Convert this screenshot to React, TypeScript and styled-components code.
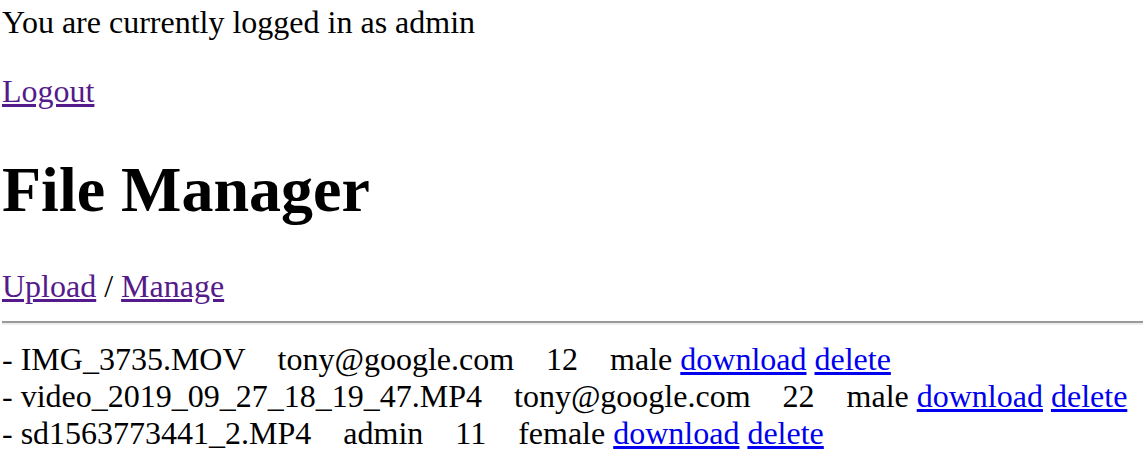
import styled, { createGlobalStyle } from 'styled-components';

const files = [
  { name: 'IMG_3735.MOV', owner: 'tony@google.com', age: 12, gender: 'male' },
  { name: 'video_2019_09_27_18_19_47.MP4', owner: 'tony@google.com', age: 22, gender: 'male' },
  { name: 'sd1563773441_2.MP4', owner: 'admin', age: 11, gender: 'female' },
];

// four spaces between fields, like the original "&nbsp;&nbsp;&nbsp; "
const GAP = '\u00a0\u00a0\u00a0 ';

const App = () => {
  return (
    <>
      <GlobalStyle />
      <StyledPage>
        <p className="status">You are currently logged in as admin</p>
        <p>
          <Link href="#" visited>
            Logout
          </Link>
        </p>
        <h1 className="page-title">File Manager</h1>
        <div className="nav">
          <Link href="#" visited>
            Upload
          </Link>{' '}
          /{' '}
          <Link href="#" visited>
            Manage
          </Link>
        </div>
        <Divider />
        <div className="file-list">
          {files.map((file) => (
            <FileRow key={file.name}>
              - {file.name}
              {GAP}
              {file.owner}
              {GAP}
              {file.age}
              {GAP}
              {file.gender} <Link href="#">download</Link>{' '}
              <Link href="#">delete</Link>
            </FileRow>
          ))}
        </div>
      </StyledPage>
    </>
  );
};

export default App;

const GlobalStyle = createGlobalStyle`
  html, body {
    margin: 0;
    padding: 0;
    background: #fff;
  }
  body {
    font-family: 'Liberation Serif', 'Times New Roman', serif;
    font-size: 32px;
    color: #000;
  }
`;

const StyledPage = styled.div`
  padding: 4px 1px 0 2px;
  line-height: 1.15;

  p {
    margin: 32px 0;
  }

  .status {
    margin-top: 0;
  }

  .page-title {
    font-size: 64px;
    font-weight: 700;
    margin: 43px 0 42px;
  }
`;

const Link = styled.a<{ visited?: boolean }>`
  color: ${(p) => (p.visited ? '#551a8b' : '#0000ee')};
  text-decoration: underline;
  cursor: pointer;
`;

const Divider = styled.hr`
  margin: 16px 0;
  height: 0;
  border: none;
  border-top: 2px solid #9a9a9a;
  border-bottom: 2px solid #eeeeee;
`;

const FileRow = styled.div`
  white-space: nowrap;
`;
